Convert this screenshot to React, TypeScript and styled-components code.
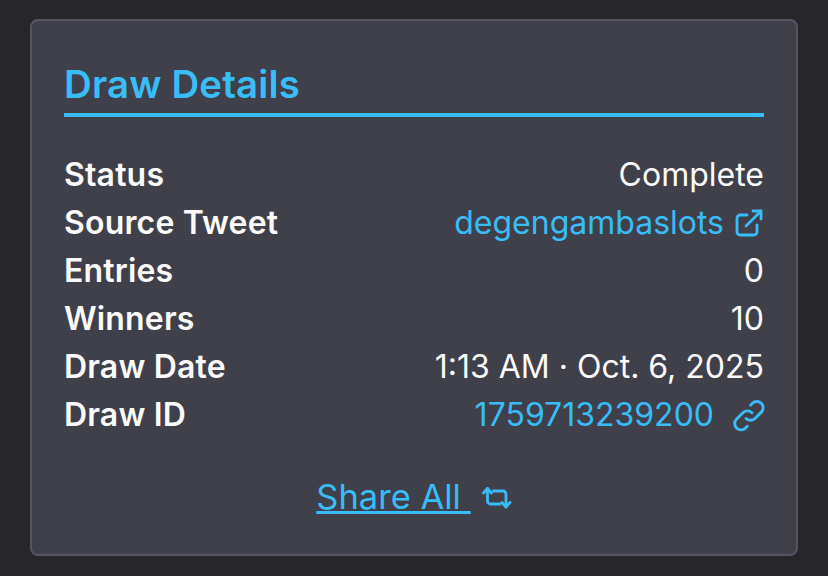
import React from "react";
import styled, { createGlobalStyle } from "styled-components";

const GlobalStyle = createGlobalStyle`
  html, body {
    margin: 0;
    height: 576px;
    overflow: hidden;
    background: #26262b;
    font-family: Inter, "Liberation Sans", sans-serif;
  }
`;

const Page = styled.div`
  padding: 19px 30px 20px;
`;

const Card = styled.section`
  box-sizing: border-box;
  height: 537px;
  padding: 40px 32px 0;
  background: #40404a;
  border: 2px solid #55555f;
  border-radius: 8px;
`;

const Title = styled.h2`
  margin: 0;
  padding-bottom: 5px;
  border-bottom: 4px solid #38bdf8;
  color: #38bdf8;
  font-size: 38.4px;
  line-height: 47px;
  font-weight: 600;
  letter-spacing: 0.17px;
`;

const Rows = styled.dl`
  margin: 33px 0 0;
`;

const Row = styled.div`
  display: flex;
  justify-content: space-between;
  align-items: center;
  height: 48px;
  font-size: 32px;
  color: #fafafa;
`;

const Label = styled.dt`
  font-weight: 600;
  letter-spacing: 0.17px;
`;

const Value = styled.dd<{ $link?: boolean; $gap?: number }>`
  display: flex;
  align-items: center;
  gap: ${(p) => p.$gap ?? 12}px;
  margin: 0;
  color: ${(p) => (p.$link ? "#38bdf8" : "#fafafa")};
`;

const Share = styled.div`
  display: flex;
  justify-content: center;
  align-items: center;
  gap: 11px;
  margin-top: 38px;
  color: #38bdf8;
  font-size: 34.5px;
`;

const ShareText = styled.span`
  text-decoration: underline;
  white-space: pre;
`;

const Icon = styled.svg`
  display: block;
  flex: none;
  overflow: visible;
  fill: none;
  stroke: currentColor;
  stroke-width: 2.8;
  stroke-linecap: round;
  stroke-linejoin: round;
`;

const ExternalIcon = () => (
  <Icon width="28" height="28" viewBox="1 -1 28 28">
    <path d="M12 6H5a3 3 0 0 0-3 3v14a3 3 0 0 0 3 3h14a3 3 0 0 0 3-3v-7" />
    <path d="M11 17 26 2" />
    <path d="M18 2h8v8" />
  </Icon>
);

const ChainIcon = () => (
  <Icon width="30" height="30" viewBox="2.5 1.5 19 19" style={{ strokeWidth: 1.85 }}>
    <path d="M13.828 10.172a4 4 0 0 0-5.656 0l-4 4a4 4 0 1 0 5.656 5.656l1.102-1.101" />
    <path d="M10.172 13.828a4 4 0 0 0 5.656 0l4-4a4 4 0 0 0-5.656-5.656l-1.1 1.1" />
  </Icon>
);

const RetweetIcon = () => (
  <Icon width="30" height="24" viewBox="0 -2 30 24">
    <path d="M1.5 6 5.5 1.5 9.5 6" />
    <path d="M5.5 1.5V14a3 3 0 0 0 3 3H18" />
    <path d="M20 15.5 24 20l4-4.500" />
    <path d="M24 20V7a3 3 0 0 0-3-3H11.500" />
  </Icon>
);

export default function App() {
  return (
    <Page>
      <GlobalStyle />
      <Card>
        <Title>Draw Details</Title>
        <Rows>
          <Row><Label>Status</Label><Value>Complete</Value></Row>
          <Row><Label>Source Tweet</Label><Value $link>degengambaslots <ExternalIcon /></Value></Row>
          <Row><Label>Entries</Label><Value>0</Value></Row>
          <Row><Label>Winners</Label><Value>10</Value></Row>
          <Row><Label>Draw Date</Label><Value>1:13 AM · Oct. 6, 2025</Value></Row>
          <Row><Label>Draw ID</Label><Value $link $gap={20}>1759713239200 <ChainIcon /></Value></Row>
        </Rows>
        <Share><ShareText>Share All </ShareText><RetweetIcon /></Share>
      </Card>
    </Page>
  );
}
